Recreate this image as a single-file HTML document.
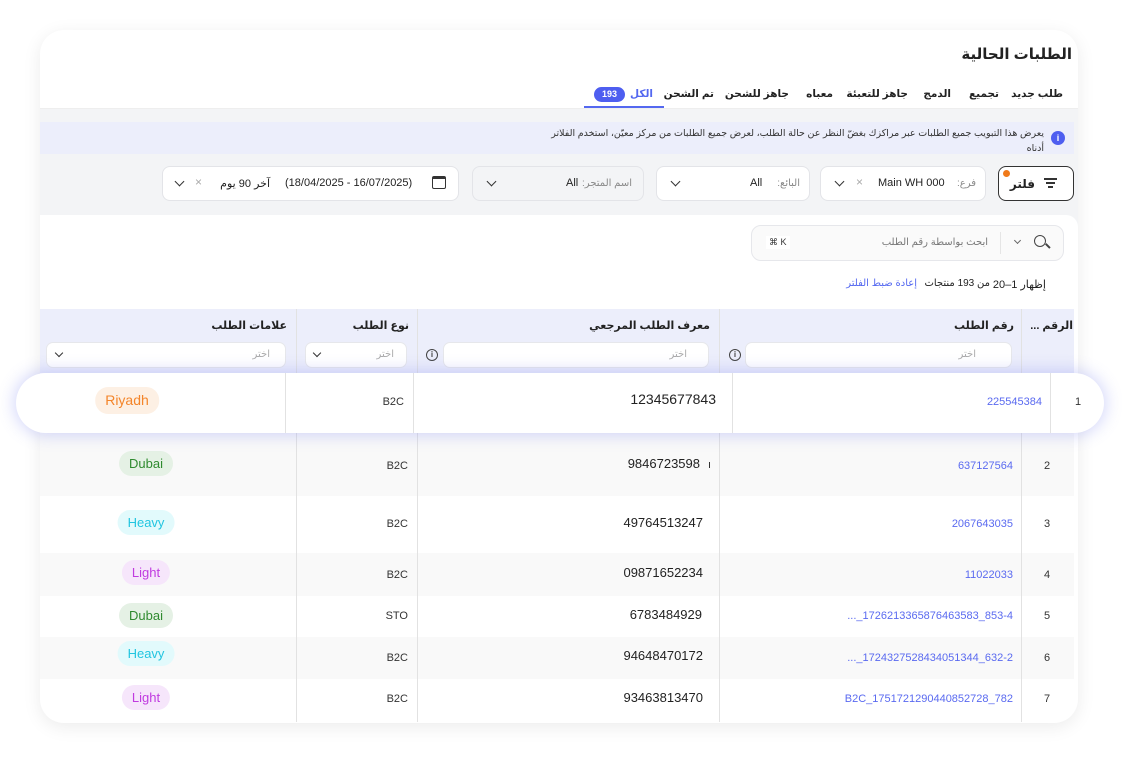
<!DOCTYPE html>
<html><head><meta charset="utf-8"><style>
*{box-sizing:border-box;margin:0;padding:0}
body{width:1140px;height:768px;background:#fff;font-family:"Liberation Sans","DejaVu Sans",sans-serif;position:relative;overflow:hidden;color:#222}
.a{position:absolute}
.card{left:40px;top:30px;width:1038px;height:693px;border-radius:24px;background:#fff;box-shadow:0 4px 18px rgba(0,0,0,.08);overflow:hidden}
.r{direction:rtl;white-space:nowrap}
.tab{top:88px;font-size:10.5px;font-weight:bold;color:#222}
.box{background:#fff;border:1px solid #e3e4e8;border-radius:8px;height:35px;top:166px}
.chev{width:7px;height:7px;border-right:1.5px solid #333;border-bottom:1.5px solid #333;transform:rotate(45deg)}
.sel{background:#fff;border:1px solid #e6e7eb;border-radius:7px;height:26px;top:342px}
.ph{font-size:10px;color:#aaa}
.info{width:12px;height:12px;border:1.3px solid #444;border-radius:50%;font-size:8px;text-align:center;line-height:10px;font-weight:bold;color:#444}
.vl{width:1px;background:#e2e2e2}
.pill{border-radius:13px;height:25px;line-height:25px;font-size:13px;padding:0 10px;transform:translateX(-50%)}
.t{font-size:11px;color:#333}
.num{font-size:13px;color:#222}
.lnk{font-size:11px;color:#5a6af0}
</style></head><body>
<div class="a card">
  <div class="a" style="left:0;top:78px;width:1038px;height:615px;background:#f3f4f6"></div>
  <div class="a" style="left:0;top:185px;width:1038px;height:508px;background:#fff;border-radius:0 12px 0 0"></div>
</div>
<div class="a r" style="right:68px;top:45px;font-size:15px;font-weight:bold">الطلبات الحالية</div>
<div class="a r tab" style="right:77px">طلب جديد</div>
<div class="a r tab" style="right:141px">تجميع</div>
<div class="a r tab" style="right:189px">الدمج</div>
<div class="a r tab" style="right:232px">جاهز للتعبئة</div>
<div class="a r tab" style="right:307px">معباه</div>
<div class="a r tab" style="right:351px">جاهز للشحن</div>
<div class="a r tab" style="right:426px">تم الشحن</div>
<div class="a r tab" style="right:487px;color:#5468f0">الكل</div>
<div class="a" style="left:594px;top:87px;width:31px;height:15px;border-radius:8px;background:#4e5ef0;color:#fff;font-size:9px;font-weight:bold;text-align:center;line-height:15px">193</div>
<div class="a" style="left:584px;top:106px;width:80px;height:2px;background:#5468f0"></div>
<div class="a" style="left:40px;top:108px;width:1038px;height:1px;background:#eee"></div>

<div class="a" style="left:40px;top:122px;width:1034px;height:32px;background:#eceefb"></div>
<div class="a" style="left:1051px;top:131px;width:14px;height:14px;border-radius:50%;background:#4e5ef0;color:#fff;font-size:9px;text-align:center;line-height:14px;font-weight:bold">i</div>
<div class="a r" style="right:96px;top:126px;font-size:9.5px;color:#333;line-height:15px;width:500px;white-space:normal">يعرض هذا التبويب جميع الطلبات عبر مراكزك بغضّ النظر عن حالة الطلب، لعرض جميع الطلبات من مركز معيّن، استخدم الفلاتر أدناه</div>

<div class="a box" style="left:998px;width:76px;border:1.3px solid #333"></div>
<div class="a" style="left:1044px;top:178px;width:13px;height:1.5px;background:#333"></div>
<div class="a" style="left:1046px;top:182px;width:9px;height:1.5px;background:#333"></div>
<div class="a" style="left:1048px;top:186px;width:5px;height:1.5px;background:#333"></div>
<div class="a r" style="right:105px;top:177px;font-size:12px;font-weight:bold">فلتر</div>
<div class="a" style="left:1003px;top:170px;width:7px;height:7px;border-radius:50%;background:#f07a1a"></div>

<div class="a box" style="left:820px;width:166px"></div>
<div class="a r ph" style="right:164px;top:178px;color:#888">فرع:</div>
<div class="a" style="left:878px;top:177px;font-size:11px">Main WH 000</div>
<div class="a" style="left:856px;top:175px;font-size:12px;color:#aaa">×</div>
<div class="a chev" style="left:836px;top:178px"></div>

<div class="a box" style="left:656px;width:154px"></div>
<div class="a r ph" style="right:340px;top:178px;color:#888">البائع:</div>
<div class="a" style="left:750px;top:177px;font-size:11px">All</div>
<div class="a chev" style="left:672px;top:178px"></div>

<div class="a box" style="left:472px;width:172px;background:#f3f4f6"></div>
<div class="a r ph" style="right:508px;top:178px;color:#888">اسم المتجر:</div>
<div class="a" style="left:566px;top:177px;font-size:11px">All</div>
<div class="a chev" style="left:488px;top:178px"></div>

<div class="a box" style="left:162px;width:297px"></div>
<div class="a" style="left:432px;top:176px;width:14px;height:13px;border:1.5px solid #333;border-top-width:3px;border-radius:2px"></div>
<div class="a" style="left:285px;top:177px;font-size:11px">(18/04/2025 - 16/07/2025)</div>
<div class="a r" style="right:870px;top:177px;font-size:11px">آخر 90 يوم</div>
<div class="a" style="left:195px;top:175px;font-size:12px;color:#aaa">×</div>
<div class="a chev" style="left:176px;top:178px"></div>

<div class="a" style="left:751px;top:225px;width:313px;height:36px;border:1px solid #e6e7eb;border-radius:10px;background:#fafafa"></div>
<div class="a" style="left:1034px;top:235px;width:12px;height:12px;border:1.5px solid #444;border-radius:50%"></div>
<div class="a" style="left:1045px;top:245px;width:6px;height:1.5px;background:#444;transform:rotate(45deg)"></div>
<div class="a chev" style="left:1015px;top:238px;width:5px;height:5px;border-color:#666"></div>
<div class="a" style="left:1000px;top:232px;width:1px;height:22px;background:#e5e5e5"></div>
<div class="a r" style="right:152px;top:237px;font-size:10px;color:#777">ابحث بواسطة رقم الطلب</div>
<div class="a" style="left:766px;top:236px;font-size:9px;color:#333;background:#fff;padding:1px 3px">⌘ K</div>

<div class="a r" style="right:94px;top:278px;font-size:11px">إظهار 1–20</div>
<div class="a r" style="right:150px;top:278px;font-size:10px">من 193 منتجات</div>
<div class="a r" style="right:223px;top:278px;font-size:10px;color:#5468f0">إعادة ضبط الفلتر</div>

<div class="a" style="left:40px;top:309px;width:1034px;height:64px;background:#eceefb"></div>
<div class="a vl" style="left:296px;top:309px;height:413px"></div>
<div class="a vl" style="left:417px;top:309px;height:413px"></div>
<div class="a vl" style="left:719px;top:309px;height:413px"></div>
<div class="a vl" style="left:1021px;top:309px;height:413px"></div>
<div class="a r" style="right:67px;top:319px;font-size:11px;font-weight:bold">الرقم ...</div>
<div class="a r" style="right:126px;top:319px;font-size:11px;font-weight:bold">رقم الطلب</div>
<div class="a r" style="right:430px;top:319px;font-size:11px;font-weight:bold">معرف الطلب المرجعي</div>
<div class="a r" style="right:731px;top:319px;font-size:11px;font-weight:bold">نوع الطلب</div>
<div class="a r" style="right:853px;top:319px;font-size:11px;font-weight:bold">علامات الطلب</div>
<div class="a sel" style="left:745px;width:267px"></div><div class="a r ph" style="right:164px;top:349px">اختر</div>
<div class="a info" style="left:729px;top:349px">i</div>
<div class="a sel" style="left:443px;width:266px"></div><div class="a r ph" style="right:453px;top:349px">اختر</div>
<div class="a info" style="left:426px;top:349px">i</div>
<div class="a sel" style="left:305px;width:102px"></div><div class="a r ph" style="right:746px;top:349px">اختر</div>
<div class="a chev" style="left:314px;top:350px;width:6px;height:6px"></div>
<div class="a sel" style="left:46px;width:240px"></div><div class="a r ph" style="right:870px;top:349px">اختر</div>
<div class="a chev" style="left:56px;top:350px;width:6px;height:6px"></div>

<div class="a" style="left:40px;top:433px;width:1034px;height:63px;background:#f9f9f9"></div>
<div class="a" style="left:40px;top:553px;width:1034px;height:43px;background:#f9f9f9"></div>
<div class="a" style="left:40px;top:637px;width:1034px;height:42px;background:#f9f9f9"></div>
<div class="a vl" style="left:296px;top:433px;height:289px"></div>
<div class="a vl" style="left:417px;top:433px;height:289px"></div>
<div class="a vl" style="left:719px;top:433px;height:289px"></div>
<div class="a vl" style="left:1021px;top:433px;height:289px"></div>

<div class="a pill" style="left:146px;top:451px;background:#e5f1e5;color:#2f8a2f">Dubai</div>
<div class="a t" style="right:732px;top:460px">B2C</div>
<div class="a num" style="right:440px;top:456px">9846723598</div>
<div class="a" style="left:709px;top:462px;width:1px;height:6px;background:#333"></div>
<div class="a lnk" style="right:127px;top:460px">637127564</div>
<div class="a t" style="left:1044px;top:460px">2</div>

<div class="a pill" style="left:146px;top:510px;background:#e2fafc;color:#22c5e0">Heavy</div>
<div class="a t" style="right:732px;top:518px">B2C</div>
<div class="a num" style="right:437px;top:515px">49764513247</div>
<div class="a lnk" style="right:127px;top:518px">2067643035</div>
<div class="a t" style="left:1044px;top:518px">3</div>

<div class="a pill" style="left:146px;top:560px;background:#f6e6fb;color:#c03be0">Light</div>
<div class="a t" style="right:732px;top:569px">B2C</div>
<div class="a num" style="right:437px;top:565px">09871652234</div>
<div class="a lnk" style="right:127px;top:569px">11022033</div>
<div class="a t" style="left:1044px;top:569px">4</div>

<div class="a pill" style="left:146px;top:603px;background:#e5f1e5;color:#2f8a2f">Dubai</div>
<div class="a t" style="right:732px;top:610px">STO</div>
<div class="a num" style="right:438px;top:607px">6783484929</div>
<div class="a lnk" style="right:127px;top:610px">..._1726213365876463583_853-4</div>
<div class="a t" style="left:1044px;top:610px">5</div>

<div class="a pill" style="left:146px;top:641px;background:#e2fafc;color:#22c5e0">Heavy</div>
<div class="a t" style="right:732px;top:652px">B2C</div>
<div class="a num" style="right:437px;top:648px">94648470172</div>
<div class="a lnk" style="right:127px;top:652px">..._1724327528434051344_632-2</div>
<div class="a t" style="left:1044px;top:652px">6</div>

<div class="a pill" style="left:146px;top:685px;background:#f6e6fb;color:#c03be0">Light</div>
<div class="a t" style="right:732px;top:693px">B2C</div>
<div class="a num" style="right:437px;top:690px">93463813470</div>
<div class="a lnk" style="right:127px;top:693px">B2C_1751721290440852728_782</div>
<div class="a t" style="left:1044px;top:693px">7</div>

<div class="a" style="left:16px;top:373px;width:1088px;height:60px;background:#fff;border-radius:30px;box-shadow:0 0 16px 2px rgba(110,120,240,.3)"></div>
<div class="a vl" style="left:285px;top:373px;height:60px"></div>
<div class="a vl" style="left:413px;top:373px;height:60px"></div>
<div class="a vl" style="left:732px;top:373px;height:60px"></div>
<div class="a vl" style="left:1050px;top:373px;height:60px"></div>
<div class="a pill" style="left:127px;top:387px;background:#fdf0e4;color:#f4852a;font-size:14px;height:27px;line-height:27px">Riyadh</div>
<div class="a t" style="right:736px;top:396px">B2C</div>
<div class="a num" style="right:424px;top:391px;font-size:14px">12345677843</div>
<div class="a lnk" style="right:98px;top:396px">225545384</div>
<div class="a t" style="left:1075px;top:396px">1</div>
</body></html>
